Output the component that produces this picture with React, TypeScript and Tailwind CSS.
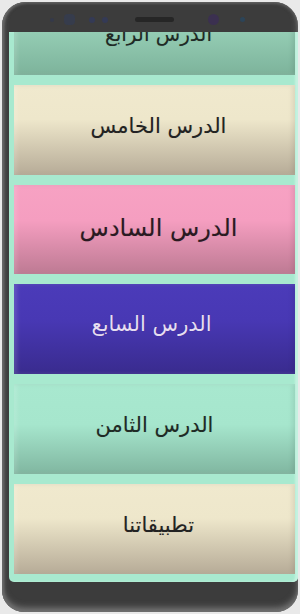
import React from "react";

type Card = {
  label: string;
  bg: string;
  text: string;
  size: string;
  h: string;
};

const cards: Card[] = [
  {
    label: "الدرس الرابع",
    bg: "bg-[linear-gradient(to_bottom,#a3dcc3_0%,#9ad3ba_40%,#7db39b_100%)]",
    text: "text-[#1f2a25]",
    size: "text-[20px] pt-[8px] pl-[8px]",
    h: "h-[90px] -mt-[47px]",
  },
  {
    label: "الدرس الخامس",
    bg: "bg-[linear-gradient(to_bottom,#f0e9ce_0%,#eee7cb_38%,#b6ab97_100%)]",
    text: "text-[#222]",
    size: "text-[21px] pb-[6px] pl-[8px]",
    h: "h-[90px]",
  },
  {
    label: "الدرس السادس",
    bg: "bg-[linear-gradient(to_bottom,#f7a2c3_0%,#f59ec0_40%,#bd7a93_100%)]",
    text: "text-[#2a1a22]",
    size: "text-[24px] pb-[4px] pl-[8px]",
    h: "h-[89px]",
  },
  {
    label: "الدرس السابع",
    bg: "bg-[linear-gradient(to_bottom,#4b3bb9_0%,#4838b4_40%,#392b8e_100%)]",
    text: "text-[#e6def2]",
    size: "text-[21px] pb-[8px] pr-[6px]",
    h: "h-[90px]",
  },
  {
    label: "الدرس الثامن",
    bg: "bg-[linear-gradient(to_bottom,#a8e8cf_0%,#a6e6cd_45%,#80b6a0_100%)]",
    text: "text-[#1f2a25]",
    size: "text-[21px] pb-[6px]",
    h: "h-[90px]",
  },
  {
    label: "تطبيقاتنا",
    bg: "bg-[linear-gradient(to_bottom,#f0e9ce_0%,#eee7cb_38%,#b6ab97_100%)]",
    text: "text-[#222]",
    size: "text-[21px] pb-[6px] pl-[8px]",
    h: "h-[90px]",
  },
];

export default function App() {
  return (
    <div className="w-[300px] h-[614px] bg-[#e9e9e9] overflow-hidden pt-[2px] pl-[2px]">
      <div className="w-[296px] h-[610px] rounded-t-[24px] rounded-b-[22px] bg-[#3c3c3c] shadow-[inset_2px_0_3px_#6a6a6a,inset_0_-4px_6px_#7a7a7a,inset_0_2px_3px_#555] flex flex-col">
        {/* top bezel */}
        <div className="h-[30px] shrink-0 flex items-center pt-[5px] pl-[48px]">
          <div className="w-[4px] h-[4px] rounded-full bg-[#34394a]" />
          <div className="ml-[10px] w-[11px] h-[11px] rounded-[4px] bg-[#363c4c]" />
          <div className="ml-[14px] w-[6px] h-[6px] rounded-full bg-[#343a55]" />
          <div className="ml-[7px] w-[6px] h-[6px] rounded-full bg-[#343a55]" />
          <div className="ml-[27px] w-[39px] h-[5px] rounded-full bg-[#262626]" />
          <div className="ml-[34px] w-[11px] h-[11px] rounded-full bg-[#3b3050]" />
          <div className="ml-[21px] w-[5px] h-[5px] rounded-full bg-[#2c4458]" />
        </div>
        {/* screen */}
        <div className="ml-[7px] h-[550px] shrink-0 bg-[#a8e9cf] rounded-b-[5px] overflow-hidden pl-[5px] pr-[3px] flex flex-col gap-[10px] shadow-[inset_-3px_0_2px_#c4f2e0]">
          {cards.map((c) => (
            <div
              key={c.label}
              className={`${c.h} ${c.bg} shrink-0 flex items-center justify-center shadow-[inset_3px_0_4px_rgba(255,255,255,0.15),inset_-3px_0_4px_rgba(0,0,0,0.08)]`}
            >
              <span
                dir="rtl"
                className={`${c.size} ${c.text} font-['DejaVu_Sans',sans-serif] [text-shadow:0_0_1px_rgba(0,0,0,0.2)]`}
              >
                {c.label}
              </span>
            </div>
          ))}
        </div>
      </div>
    </div>
  );
}
